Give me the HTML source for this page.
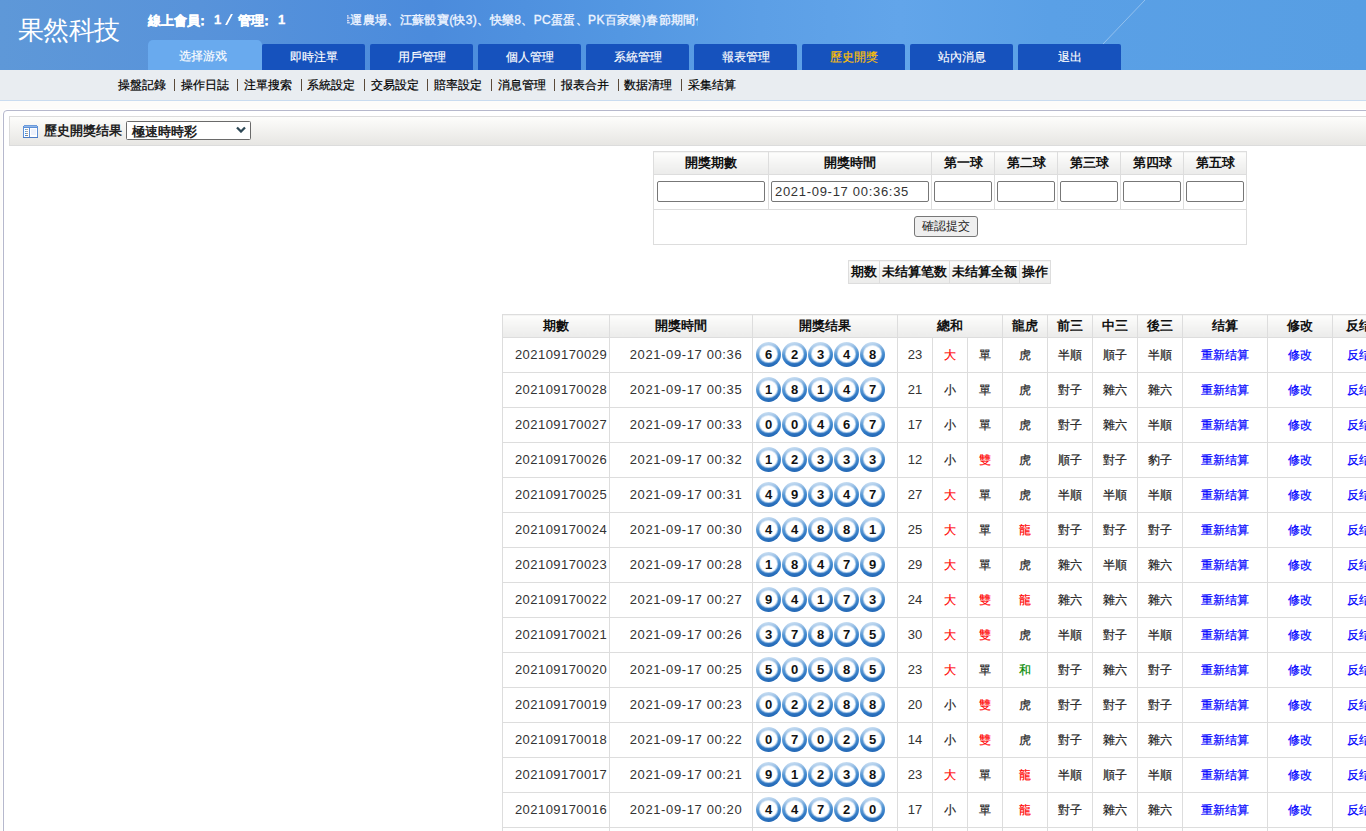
<!DOCTYPE html>
<html><head><meta charset="utf-8">
<style>
*{margin:0;padding:0;box-sizing:border-box}
html,body{width:1366px;height:831px;overflow:hidden;background:#fdfcfa;font-family:"Liberation Sans",sans-serif;font-size:13px;color:#333}
#hd{position:absolute;left:0;top:0;width:1366px;height:70px;overflow:hidden;
 background:linear-gradient(90deg,#5e98d8 0px,#5893da 200px,#4b8bdc 430px,#5397e2 620px,#5c9fe6 760px,#62a5ea 900px,#5aa0e6 1050px,#579ee3 1366px)}
#streak{position:absolute;left:1100px;top:0;width:50px;height:46px}
#logo{position:absolute;left:18px;top:13px;font-family:"Liberation Serif",serif;font-size:26px;color:#fff;letter-spacing:-0.6px;white-space:nowrap;font-weight:300}
#online{position:absolute;left:148px;top:12px;font-weight:bold;font-size:13px;color:#fff;white-space:nowrap}
#online span{position:absolute;top:0;-webkit-text-stroke:0.3px #fff}
#mq{position:absolute;left:347px;top:11px;width:351px;height:18px;overflow:hidden;white-space:nowrap}
#mq span{position:absolute;left:-9px;top:0;color:#eef4ff;font-size:12px;line-height:18px;letter-spacing:0.35px;font-weight:normal;-webkit-text-stroke:0.35px #eef4ff}
.tab{position:absolute;top:44px;width:103px;height:26px;background:#1652bd;color:#fff;font-size:12px;text-align:center;line-height:26px;border-radius:2px 2px 0 0;-webkit-text-stroke:0.15px}
.tab.sel{top:40px;height:30px;background:#69aaee;border-radius:5px 5px 0 0;width:114px;line-height:32px;padding-right:5px}
.tab.y{color:#ffc000}
#sub{position:absolute;left:0;top:70px;width:1366px;height:31px;background:#e9edf1;border-bottom:1px solid #cadcf0}
#sub .it{position:absolute;top:7px;font-size:12px;color:#000;white-space:nowrap;-webkit-text-stroke:0.2px}
#sub .sp{position:absolute;top:9px;width:1px;height:12px;background:#5a4a3a}
#panel{position:absolute;left:3px;top:110px;width:1400px;height:760px;border:1px solid #b6b8cc;border-radius:4px;background:#fff;box-shadow:0 0 0 1px #fff}
#ph{position:absolute;left:9px;top:116px;width:1400px;height:30px;border:1px solid #dcdcdc;background:linear-gradient(#fdfdfb,#e7e6e3)}
#icon{position:absolute;left:23px;top:125px;width:15px;height:13px}
#ptitle{position:absolute;left:44px;top:122px;font-weight:bold;font-size:13px;color:#222;white-space:nowrap}
#sel{position:absolute;left:126px;top:121px;width:125px;height:19px;border:1px solid #6a6a6a;border-radius:1.5px;background:#fff}
#sel span{position:absolute;left:5px;top:1px;font-weight:bold;font-size:13px;color:#222}
#sel svg{position:absolute;left:109px;top:4px}
table{border-collapse:collapse;position:absolute}
td,th{border:1px solid #ddd;text-align:center;padding:0}
th{background:linear-gradient(#fdfdfc,#ebebea);font-weight:bold;color:#111;font-size:13px}
#form{left:653px;top:151px}
#form th{height:23px}
#form td{height:35px;vertical-align:top;padding-top:6px}
#form input{letter-spacing:0.7px;border:1px solid #777;border-radius:2px;height:21px;background:#fff;font-family:"Liberation Sans",sans-serif;font-size:13px;color:#333;padding-left:3px;display:block;margin:0 auto}
#btn{display:inline-block;position:relative;left:-4px;border:1px solid #777;border-radius:3px;background:#efefef;font-size:12px;width:64px;height:21px;line-height:19px;color:#222;text-align:center}
#small{left:848px;top:260px}
#small th{height:23px}
#main{left:502px;top:314px;width:900px;table-layout:fixed}
#main th{height:23px}
#main td{height:35px;font-size:12px;color:#222;padding-top:1px;-webkit-text-stroke:0.2px}
#main td.c1{letter-spacing:0.45px;padding-left:10px;font-size:13px;color:#333;padding-top:0;padding-bottom:2px}
#main td.c2{letter-spacing:0.62px;padding-left:10px;font-size:13px;color:#333;padding-top:0;padding-bottom:2px}
#main td.n{font-size:13px;color:#333;padding-top:0;padding-bottom:2px}
#main td.balls{padding-top:0}
#main td.c1,#main td.c2,#main td.n,#main td.balls{-webkit-text-stroke:0}
#main td.r{color:#f00}#main td.g{color:#080}#main td.b{color:#00f}
.balls{text-align:left;padding-left:3px!important;white-space:nowrap}
.ball{display:inline-block;width:25px;height:25px;margin-right:1px;border-radius:50%;vertical-align:middle;position:relative;top:-1px;
 background:linear-gradient(170deg,#d8e8f6 0%,#a3c6e9 22%,#4f93d3 48%,#3079c5 72%,#1f62b0 100%)}
.ball i{position:absolute;left:4px;top:4.5px;width:17px;height:15.5px;border-radius:50%;background:#fff;box-shadow:0 0 1px 1px rgba(255,255,255,.7)}
.ball b{position:absolute;left:0;top:0;width:25px;height:25px;line-height:25px;text-align:center;font-weight:bold;font-size:13px;color:#111}
</style></head><body>
<div id="hd">
 <svg id="streak" viewBox="0 0 50 46"><line x1="3" y1="44" x2="45" y2="0" stroke="rgba(255,255,255,.35)" stroke-width="1"/></svg>
 <div id="logo">果然科技</div>
 <div id="online"><span style="left:0">線上會員</span><span style="left:48px">：</span><span style="left:66px">1</span><span style="left:80px;top:2px;width:2px;height:11px;background:#fff;transform:skewX(-28deg)"></span><span style="left:90px">管理</span><span style="left:112px">：</span><span style="left:130px">1</span></div>
 <div id="mq"><span>幸運農場、江蘇骰寶(快3)、快樂8、PC蛋蛋、PK百家樂)春節期間休市</span></div>
 <div class="tab sel" style="left:148px">选择游戏</div>
 <div class="tab" style="left:262px">即時注單</div>
 <div class="tab" style="left:370px">用戶管理</div>
 <div class="tab" style="left:478px">個人管理</div>
 <div class="tab" style="left:586px">系統管理</div>
 <div class="tab" style="left:694px">報表管理</div>
 <div class="tab y" style="left:802px">歷史開獎</div>
 <div class="tab" style="left:910px">站內消息</div>
 <div class="tab" style="left:1018px">退出</div>
</div>
<div id="sub">
 <span class="it" style="left:118px">操盤記錄</span><span class="sp" style="left:174px"></span>
 <span class="it" style="left:181px">操作日誌</span><span class="sp" style="left:237px"></span>
 <span class="it" style="left:244px">注單搜索</span><span class="sp" style="left:301px"></span>
 <span class="it" style="left:307px">系統設定</span><span class="sp" style="left:364px"></span>
 <span class="it" style="left:371px">交易設定</span><span class="sp" style="left:427px"></span>
 <span class="it" style="left:434px">賠率設定</span><span class="sp" style="left:491px"></span>
 <span class="it" style="left:498px">消息管理</span><span class="sp" style="left:554px"></span>
 <span class="it" style="left:561px">报表合并</span><span class="sp" style="left:618px"></span>
 <span class="it" style="left:624px">数据清理</span><span class="sp" style="left:681px"></span>
 <span class="it" style="left:688px">采集结算</span>
</div>
<div id="panel"></div>
<div id="ph"></div>
<svg id="icon" viewBox="0 0 15 13" shape-rendering="crispEdges"><rect x="0" y="1" width="15" height="12" fill="#5d8fd6"/><rect x="1" y="0" width="13" height="1" fill="#6c9ada"/><rect x="1" y="1" width="13" height="1" fill="#92b9ea"/><rect x="1" y="3" width="5" height="9" fill="#fff"/><rect x="7" y="3" width="7" height="9" fill="#fff"/><rect x="8" y="4" width="5" height="6" fill="#eef2fb"/><rect x="0" y="12" width="15" height="1" fill="#4d7cc4"/><rect x="2" y="4" width="1" height="1" fill="#46a0f0"/><rect x="3" y="4" width="2" height="1" fill="#b0aca6"/><rect x="2" y="6" width="1" height="1" fill="#46a0f0"/><rect x="3" y="6" width="2" height="1" fill="#b0aca6"/><rect x="2" y="8" width="1" height="1" fill="#2a8af0"/><rect x="3" y="8" width="2" height="1" fill="#a09c96"/><rect x="2" y="10" width="1" height="1" fill="#2a8af0"/><rect x="3" y="10" width="2" height="1" fill="#8a8680"/></svg>
<div id="ptitle">歷史開獎结果</div>
<div id="sel"><span>極速時時彩</span><svg width="10" height="7" viewBox="0 0 10 7"><path d="M1 1.5L5 5.5L9 1.5" stroke="#2d4856" stroke-width="2.3" fill="none"/></svg></div>

<table id="form">
<tr><th style="width:115px">開獎期數</th><th style="width:163px">開獎時間</th><th style="width:63px">第一球</th><th style="width:63px">第二球</th><th style="width:63px">第三球</th><th style="width:63px">第四球</th><th style="width:63px">第五球</th></tr>
<tr><td><input style="width:108px"></td><td><input style="width:158px" value="2021-09-17 00:36:35"></td><td><input style="width:58px"></td><td><input style="width:58px"></td><td><input style="width:58px"></td><td><input style="width:58px"></td><td><input style="width:58px"></td></tr>
<tr><td colspan="7" style="height:35px"><span id="btn">確認提交</span></td></tr>
</table>

<table id="small">
<tr><th style="width:31px">期数</th><th style="width:70px">未结算笔数</th><th style="width:70px">未结算全额</th><th style="width:31px">操作</th></tr>
</table>

<table id="main">
<colgroup><col style="width:107px"><col style="width:143px"><col style="width:145px"><col style="width:35px"><col style="width:35px"><col style="width:35px"><col style="width:45px"><col style="width:45px"><col style="width:45px"><col style="width:45px"><col style="width:85px"><col style="width:65px"><col style="width:65px"><col style="width:65px"></colgroup>
<tr><th>期數</th><th>開獎時間</th><th>開獎结果</th><th colspan="3">總和</th><th>龍虎</th><th>前三</th><th>中三</th><th>後三</th><th>结算</th><th>修改</th><th>反结算</th><th></th></tr>
<tr><td class="c1">202109170029</td><td class="c2">2021-09-17 00:36</td><td class="balls"><span class="ball"><i></i><b>6</b></span><span class="ball"><i></i><b>2</b></span><span class="ball"><i></i><b>3</b></span><span class="ball"><i></i><b>4</b></span><span class="ball"><i></i><b>8</b></span></td><td class="n">23</td><td class="r">大</td><td>單</td><td>虎</td><td>半順</td><td>順子</td><td>半順</td><td class="b">重新结算</td><td class="b">修改</td><td class="b">反结算</td><td></td></tr>
<tr><td class="c1">202109170028</td><td class="c2">2021-09-17 00:35</td><td class="balls"><span class="ball"><i></i><b>1</b></span><span class="ball"><i></i><b>8</b></span><span class="ball"><i></i><b>1</b></span><span class="ball"><i></i><b>4</b></span><span class="ball"><i></i><b>7</b></span></td><td class="n">21</td><td>小</td><td>單</td><td>虎</td><td>對子</td><td>雜六</td><td>雜六</td><td class="b">重新结算</td><td class="b">修改</td><td class="b">反结算</td><td></td></tr>
<tr><td class="c1">202109170027</td><td class="c2">2021-09-17 00:33</td><td class="balls"><span class="ball"><i></i><b>0</b></span><span class="ball"><i></i><b>0</b></span><span class="ball"><i></i><b>4</b></span><span class="ball"><i></i><b>6</b></span><span class="ball"><i></i><b>7</b></span></td><td class="n">17</td><td>小</td><td>單</td><td>虎</td><td>對子</td><td>雜六</td><td>半順</td><td class="b">重新结算</td><td class="b">修改</td><td class="b">反结算</td><td></td></tr>
<tr><td class="c1">202109170026</td><td class="c2">2021-09-17 00:32</td><td class="balls"><span class="ball"><i></i><b>1</b></span><span class="ball"><i></i><b>2</b></span><span class="ball"><i></i><b>3</b></span><span class="ball"><i></i><b>3</b></span><span class="ball"><i></i><b>3</b></span></td><td class="n">12</td><td>小</td><td class="r">雙</td><td>虎</td><td>順子</td><td>對子</td><td>豹子</td><td class="b">重新结算</td><td class="b">修改</td><td class="b">反结算</td><td></td></tr>
<tr><td class="c1">202109170025</td><td class="c2">2021-09-17 00:31</td><td class="balls"><span class="ball"><i></i><b>4</b></span><span class="ball"><i></i><b>9</b></span><span class="ball"><i></i><b>3</b></span><span class="ball"><i></i><b>4</b></span><span class="ball"><i></i><b>7</b></span></td><td class="n">27</td><td class="r">大</td><td>單</td><td>虎</td><td>半順</td><td>半順</td><td>半順</td><td class="b">重新结算</td><td class="b">修改</td><td class="b">反结算</td><td></td></tr>
<tr><td class="c1">202109170024</td><td class="c2">2021-09-17 00:30</td><td class="balls"><span class="ball"><i></i><b>4</b></span><span class="ball"><i></i><b>4</b></span><span class="ball"><i></i><b>8</b></span><span class="ball"><i></i><b>8</b></span><span class="ball"><i></i><b>1</b></span></td><td class="n">25</td><td class="r">大</td><td>單</td><td class="r">龍</td><td>對子</td><td>對子</td><td>對子</td><td class="b">重新结算</td><td class="b">修改</td><td class="b">反结算</td><td></td></tr>
<tr><td class="c1">202109170023</td><td class="c2">2021-09-17 00:28</td><td class="balls"><span class="ball"><i></i><b>1</b></span><span class="ball"><i></i><b>8</b></span><span class="ball"><i></i><b>4</b></span><span class="ball"><i></i><b>7</b></span><span class="ball"><i></i><b>9</b></span></td><td class="n">29</td><td class="r">大</td><td>單</td><td>虎</td><td>雜六</td><td>半順</td><td>雜六</td><td class="b">重新结算</td><td class="b">修改</td><td class="b">反结算</td><td></td></tr>
<tr><td class="c1">202109170022</td><td class="c2">2021-09-17 00:27</td><td class="balls"><span class="ball"><i></i><b>9</b></span><span class="ball"><i></i><b>4</b></span><span class="ball"><i></i><b>1</b></span><span class="ball"><i></i><b>7</b></span><span class="ball"><i></i><b>3</b></span></td><td class="n">24</td><td class="r">大</td><td class="r">雙</td><td class="r">龍</td><td>雜六</td><td>雜六</td><td>雜六</td><td class="b">重新结算</td><td class="b">修改</td><td class="b">反结算</td><td></td></tr>
<tr><td class="c1">202109170021</td><td class="c2">2021-09-17 00:26</td><td class="balls"><span class="ball"><i></i><b>3</b></span><span class="ball"><i></i><b>7</b></span><span class="ball"><i></i><b>8</b></span><span class="ball"><i></i><b>7</b></span><span class="ball"><i></i><b>5</b></span></td><td class="n">30</td><td class="r">大</td><td class="r">雙</td><td>虎</td><td>半順</td><td>對子</td><td>半順</td><td class="b">重新结算</td><td class="b">修改</td><td class="b">反结算</td><td></td></tr>
<tr><td class="c1">202109170020</td><td class="c2">2021-09-17 00:25</td><td class="balls"><span class="ball"><i></i><b>5</b></span><span class="ball"><i></i><b>0</b></span><span class="ball"><i></i><b>5</b></span><span class="ball"><i></i><b>8</b></span><span class="ball"><i></i><b>5</b></span></td><td class="n">23</td><td class="r">大</td><td>單</td><td class="g">和</td><td>對子</td><td>雜六</td><td>對子</td><td class="b">重新结算</td><td class="b">修改</td><td class="b">反结算</td><td></td></tr>
<tr><td class="c1">202109170019</td><td class="c2">2021-09-17 00:23</td><td class="balls"><span class="ball"><i></i><b>0</b></span><span class="ball"><i></i><b>2</b></span><span class="ball"><i></i><b>2</b></span><span class="ball"><i></i><b>8</b></span><span class="ball"><i></i><b>8</b></span></td><td class="n">20</td><td>小</td><td class="r">雙</td><td>虎</td><td>對子</td><td>對子</td><td>對子</td><td class="b">重新结算</td><td class="b">修改</td><td class="b">反结算</td><td></td></tr>
<tr><td class="c1">202109170018</td><td class="c2">2021-09-17 00:22</td><td class="balls"><span class="ball"><i></i><b>0</b></span><span class="ball"><i></i><b>7</b></span><span class="ball"><i></i><b>0</b></span><span class="ball"><i></i><b>2</b></span><span class="ball"><i></i><b>5</b></span></td><td class="n">14</td><td>小</td><td class="r">雙</td><td>虎</td><td>對子</td><td>雜六</td><td>雜六</td><td class="b">重新结算</td><td class="b">修改</td><td class="b">反结算</td><td></td></tr>
<tr><td class="c1">202109170017</td><td class="c2">2021-09-17 00:21</td><td class="balls"><span class="ball"><i></i><b>9</b></span><span class="ball"><i></i><b>1</b></span><span class="ball"><i></i><b>2</b></span><span class="ball"><i></i><b>3</b></span><span class="ball"><i></i><b>8</b></span></td><td class="n">23</td><td class="r">大</td><td>單</td><td class="r">龍</td><td>半順</td><td>順子</td><td>半順</td><td class="b">重新结算</td><td class="b">修改</td><td class="b">反结算</td><td></td></tr>
<tr><td class="c1">202109170016</td><td class="c2">2021-09-17 00:20</td><td class="balls"><span class="ball"><i></i><b>4</b></span><span class="ball"><i></i><b>4</b></span><span class="ball"><i></i><b>7</b></span><span class="ball"><i></i><b>2</b></span><span class="ball"><i></i><b>0</b></span></td><td class="n">17</td><td>小</td><td>單</td><td class="r">龍</td><td>對子</td><td>雜六</td><td>雜六</td><td class="b">重新结算</td><td class="b">修改</td><td class="b">反结算</td><td></td></tr>
<tr><td class="c1">202109170015</td><td class="c2">2021-09-17 00:19</td><td class="balls"><span class="ball"><i></i><b>1</b></span><span class="ball"><i></i><b>2</b></span><span class="ball"><i></i><b>3</b></span><span class="ball"><i></i><b>4</b></span><span class="ball"><i></i><b>5</b></span></td><td class="n">15</td><td>小</td><td>單</td><td>虎</td><td>順子</td><td>順子</td><td>順子</td><td class="b">重新结算</td><td class="b">修改</td><td class="b">反结算</td><td></td></tr>
</table>
</body></html>
